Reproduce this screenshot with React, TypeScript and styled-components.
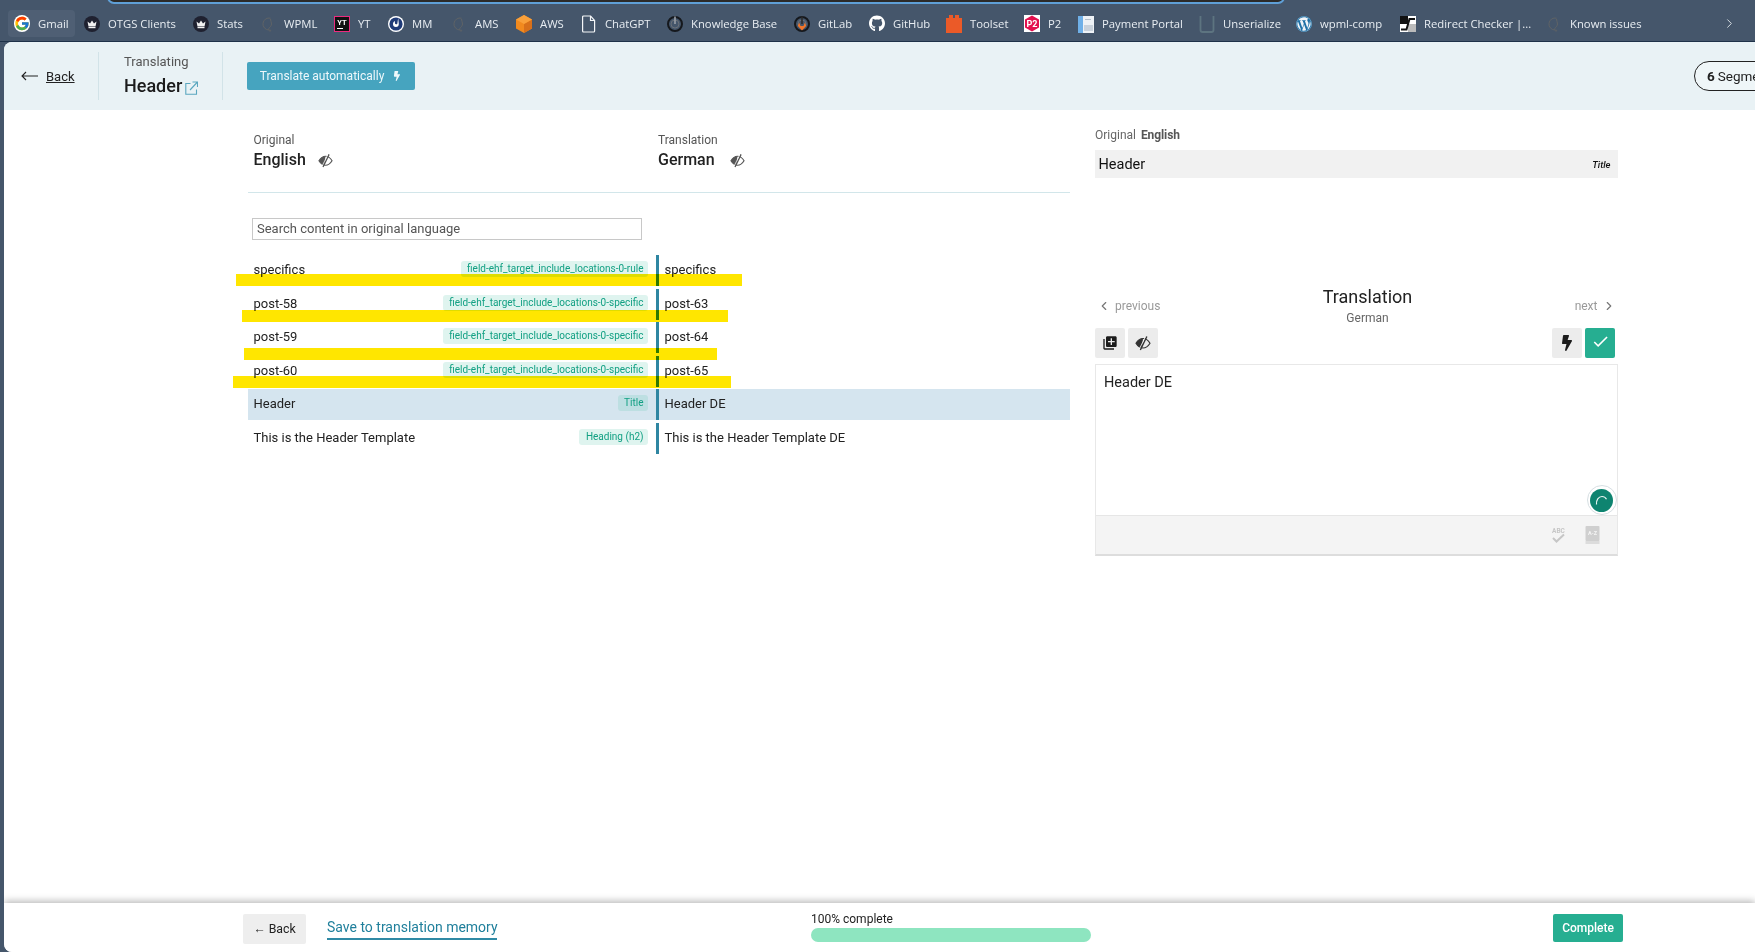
import React from "react";
import styled, { createGlobalStyle } from "styled-components";
import { FcGoogle } from "react-icons/fc";
import { FaGithub, FaWordpress, FaBolt } from "react-icons/fa";
import { MdLibraryAdd, MdCheck } from "react-icons/md";
import { ChevronLeft, ChevronRight } from "lucide-react";

const Global = createGlobalStyle`
  html, body { margin: 0; padding: 0; height: 100%; background: #45566b; }
  #root { height: 100%; }
  * { box-sizing: border-box; }
  body { font-family: Roboto, "Liberation Sans", sans-serif; color: #222; }
`;

const Shell = styled.div`
  height: 952px;
  width: 1755px;
  display: flex;
  flex-direction: column;
  overflow: hidden;
  background: #45566b;
`;

/* ---------- Bookmarks ---------- */
const BookmarkBar = styled.div`
  position: relative;
  height: 42px;
  padding: 10px 0 0 8px;
  display: flex;
  align-items: flex-start;
  gap: 3px;
  border-bottom: 1px solid #1e3148;
  flex: none;
`;
const AddressEdge = styled.div`
  position: absolute;
  left: 107px;
  top: -10px;
  width: 1178px;
  height: 14px;
  background: #2c2a28;
  border: 2px solid #5f9fd6;
  border-radius: 10px;
`;
const Bookmark = styled.div<{ $active?: boolean; $width: number }>`
  width: ${(p) => p.$width}px;
  height: 27px;
  padding: 0 0 0 6px;
  display: flex;
  align-items: center;
  gap: 8px;
  border-radius: 4px;
  background: ${(p) => (p.$active ? "#4f5f74" : "transparent")};
  font-family: "Open Sans", sans-serif;
  font-size: 11.3px;
  color: #e8edf2;
  white-space: nowrap;
  flex: none;
`;
const BookmarkIcon = styled.span`
  width: 16px;
  height: 16px;
  display: flex;
  align-items: center;
  justify-content: center;
  flex: none;
  svg { display: block; }
`;
const BookmarkMore = styled.div`
  margin-left: auto;
  margin-right: 18px;
  height: 27px;
  display: flex;
  align-items: center;
  color: #dfe5ea;
`;

const Crown = () => (
  <svg width="16" height="16" viewBox="0 0 16 16">
    <circle cx="8" cy="8" r="8" fill="#1f2130" />
    <path d="M3.5 5.5 6 7.5 8 4.5 10 7.5 12.5 5.5 11.5 10.5H4.5Z" fill="#f2f2f2" />
    <rect x="4.5" y="11" width="7" height="1.2" fill="#f2f2f2" />
  </svg>
);
const Swirl = () => (
  <svg width="16" height="16" viewBox="0 0 16 16" fill="none" stroke="#5f6366" strokeWidth="1">
    <path d="M10.5 2.2A6 6 0 1 0 9 14" />
    <path d="M9 14c-1.5-2 2.5-3 2.5-6 0-2-1-3-1-5" />
    <circle cx="10" cy="14.6" r=".7" />
  </svg>
);
const YtIcon = () => (
  <svg width="16" height="16" viewBox="0 0 16 16">
    <rect x=".5" y=".5" width="15" height="15" fill="#111" stroke="#ec2a7f" />
    <text x="8" y="9" textAnchor="middle" fontSize="7.5" fontWeight="700" fontFamily="Roboto" fill="#fff">YT</text>
    <rect x="3" y="12" width="6" height="1" fill="#fff" />
  </svg>
);
const MmIcon = () => (
  <svg width="16" height="16" viewBox="0 0 16 16">
    <circle cx="8" cy="8" r="8" fill="#fff" />
    <circle cx="8" cy="8" r="6.6" fill="#1e3a78" />
    <path d="M10.2 1.800 10.800 8a2.900 2.900 0 0 1-5.800 0c0-1.400.7-2.500 1.800-3.100L7 7.400a1.300 1.300 0 0 0 2.300.4Z" fill="#fff" />
  </svg>
);
const CubeIcon = () => (
  <svg width="16" height="18" viewBox="0 0 16 18">
    <path d="M8 0 16 4.500V13.500L8 18 0 13.500V4.500Z" fill="#f28a1e" />
    <path d="M8 9 16 4.500V13.500L8 18Z" fill="#d8701a" />
    <path d="M8 0 16 4.500 8 9 0 4.500Z" fill="#f9a03a" />
  </svg>
);
const PageIcon = () => (
  <svg width="16" height="18" viewBox="0 0 16 18" fill="none" stroke="#f4f6f8" strokeWidth="1.2">
    <path d="M2.600 1h7l4 4.500V16a1 1 0 0 1-1 1h-10a1 1 0 0 1-1-1V2a1 1 0 0 1 1-1Z" />
    <path d="M9.500 1v4.500h4" />
  </svg>
);
const PowerIcon = ({ flame }: { flame?: boolean }) => (
  <svg width="16" height="17" viewBox="0 0 16 17" fill="none">
    <circle cx="8" cy="9" r="7" stroke="#15181d" strokeWidth="2" />
    <circle cx="8" cy="9" r="4" stroke="#6a7078" strokeWidth="1" />
    <path d="M8 1.500V9" stroke={flame ? "#2b2b2b" : "#9aa0a8"} strokeWidth="1.600" />
    {flame && <path d="M8 15.500 3.800 10.800 5.200 7.500 6.500 11H9.500L10.800 7.500 12.200 10.800Z" fill="#f0752a" />}
  </svg>
);
const ToolsetIcon = () => (
  <svg width="16" height="18" viewBox="0 0 16 18">
    <path d="M0 3h3V0h4v3h2V0h4v3h3v15H0Z" fill="#eb5a28" />
  </svg>
);
const P2Icon = () => (
  <svg width="16" height="17" viewBox="0 0 16 17">
    <rect width="16" height="17" fill="#fff" />
    <path d="M8 .5 15 4.500V12.500L8 16.500 1 12.500V4.500Z" fill="#e3104f" />
    <text x="8" y="11.500" textAnchor="middle" fontSize="9" fontWeight="700" fontFamily="Roboto" fill="#fff">P2</text>
  </svg>
);
const PaymentIcon = () => (
  <svg width="16" height="18" viewBox="0 0 16 18">
    <rect x="0" y="1" width="16" height="17" fill="#eef2f6" />
    <rect x="0" y="1" width="5" height="17" fill="#6fb0e8" />
    <rect x="6" y="10" width="9" height="6" fill="#c9d2dc" />
    <rect x="7" y="4" width="6" height="1" fill="#b4bfca" />
  </svg>
);
const UnserializeIcon = () => (
  <svg width="16" height="18" viewBox="0 0 16 18" fill="none" stroke="#5d7480" strokeWidth="1.800">
    <path d="M1.500 1v14a2 2 0 0 0 2 2h9a2 2 0 0 0 2-2V1" />
  </svg>
);
const RedirectIcon = () => (
  <svg width="16" height="16" viewBox="0 0 16 16">
    <rect width="16" height="16" fill="#fff" />
    <rect width="8" height="8" fill="#111" />
    <rect x="8" y="8" width="8" height="8" fill="#bbb" />
    <path d="M1 13.500H6.500L9.500 3H15" fill="none" stroke="#111" strokeWidth="2" />
  </svg>
);

const bookmarks: { label: string; width: number; icon: React.ReactNode; active?: boolean }[] = [
  { label: "Gmail", width: 67, icon: <FcGoogle size={17} style={{ background: "#fff", borderRadius: 9 }} />, active: true },
  { label: "OTGS Clients", width: 106, icon: <Crown /> },
  { label: "Stats", width: 64, icon: <Crown /> },
  { label: "WPML", width: 71, icon: <Swirl /> },
  { label: "YT", width: 51, icon: <YtIcon /> },
  { label: "MM", width: 60, icon: <MmIcon /> },
  { label: "AMS", width: 62, icon: <Swirl /> },
  { label: "AWS", width: 62, icon: <CubeIcon /> },
  { label: "ChatGPT", width: 83, icon: <PageIcon /> },
  { label: "Knowledge Base", width: 124, icon: <PowerIcon /> },
  { label: "GitLab", width: 72, icon: <PowerIcon flame /> },
  { label: "GitHub", width: 74, icon: <FaGithub size={17} color="#fff" /> },
  { label: "Toolset", width: 75, icon: <ToolsetIcon /> },
  { label: "P2", width: 51, icon: <P2Icon /> },
  { label: "Payment Portal", width: 118, icon: <PaymentIcon /> },
  { label: "Unserialize", width: 94, icon: <UnserializeIcon /> },
  { label: "wpml-comp", width: 101, icon: <FaWordpress size={16} color="#f0f4f8" style={{ background: "#1d6fa5", borderRadius: 8 }} /> },
  { label: "Redirect Checker |...", width: 143, icon: <RedirectIcon /> },
  { label: "Known issues", width: 100, icon: <Swirl /> },
];

/* ---------- Page ---------- */
const Page = styled.div`
  flex: 1;
  margin-left: 4px;
  min-height: 0;
  background: #fff;
  border-radius: 8px 0 0 8px;
  overflow: hidden;
  display: flex;
  flex-direction: column;
`;
const Header = styled.header`
  height: 68px;
  flex: none;
  background: #e9f2f5;
  display: flex;
  align-items: center;
`;
const BackCell = styled.div`
  width: 95px;
  height: 48px;
  padding-left: 17px;
  display: flex;
  align-items: center;
  gap: 8px;
  border-right: 1px solid #d2e3e8;
`;
const BackLink = styled.a`
  font-size: 13px;
  color: #222;
  text-decoration: underline;
`;
const TitleCell = styled.div`
  width: 124px;
  height: 48px;
  padding: 1px 0 0 25px;
  border-right: 1px solid #d2e3e8;
`;
const TitleLabel = styled.div`
  font-size: 13px;
  line-height: 18px;
  color: #555;
`;
const TitleRow = styled.div`
  margin-top: 3px;
  display: flex;
  align-items: center;
  gap: 3px;
  font-size: 18px;
  line-height: 24px;
  font-weight: 500;
  color: #1b1b1b;
  svg { margin-top: 4px; }
`;
const AutoButton = styled.button`
  margin-left: 24px;
  width: 168px;
  height: 28px;
  border: 0;
  border-radius: 2px;
  background: #46a4bf;
  color: #eef8fb;
  font: 400 12px Roboto, sans-serif;
  display: flex;
  align-items: center;
  justify-content: center;
  gap: 8px;
`;
const SegmentsPill = styled.div`
  margin-left: auto;
  margin-right: -37px;
  width: 98px;
  height: 30px;
  border: 1px solid #222;
  border-radius: 15px;
  padding-left: 12px;
  display: flex;
  align-items: center;
  gap: 3px;
  font-size: 13.5px;
  background: #eff6f8;
  white-space: nowrap;
  b { font-weight: 700; }
`;

const Main = styled.main`
  flex: 1;
  min-height: 0;
  display: flex;
  padding-left: 244px;
`;
const LeftPanel = styled.section`
  position: relative;
  width: 822px;
  flex: none;
`;
const LangHead = styled.div`
  display: grid;
  grid-template-columns: 404.500px 1fr;
  padding: 21px 0 21px 5.500px;
  border-bottom: 1px solid #d2e6ea;
  height: 83px;
`;
const LangLabel = styled.div`
  font-size: 12px;
  line-height: 18px;
  color: #555;
`;
const LangName = styled.div<{ $gap: number }>`
  display: flex;
  align-items: center;
  gap: ${(p) => p.$gap}px;
  font-size: 16px;
  line-height: 22px;
  font-weight: 500;
  color: #222;
`;
const SearchBox = styled.input`
  display: block;
  margin: 25px 0 15px 4px;
  width: 390px;
  height: 22px;
  border: 1px solid #c8c8c8;
  padding: 0 3px 2px 4px;
  outline: none;
  font: 400 13px Roboto, sans-serif;
  &::placeholder { color: #555; opacity: 1; }
`;
const Rows = styled.div`
  display: flex;
  flex-direction: column;
  gap: 2.600px;
`;
const Row = styled.div<{ $selected?: boolean }>`
  display: grid;
  grid-template-columns: 408px 3px 1fr;
  height: 31px;
  background: ${(p) => (p.$selected ? "#d5e5ef" : "transparent")};
`;
const SourceCell = styled.div`
  display: flex;
  align-items: center;
  justify-content: space-between;
  padding: 0 8px 2px 5.500px;
  font-size: 13px;
  color: #222;
`;
const Rule = styled.div`
  background: #2f86a2;
`;
const TargetCell = styled.div`
  display: flex;
  align-items: center;
  padding: 0 0 2px 5.500px;
  font-size: 13px;
  color: #222;
`;
const Tag = styled.span<{ $selected?: boolean }>`
  height: 16px;
  margin-top: -1px;
  padding: 0 4.500px 0 6.500px;
  border-radius: 3px;
  background: ${(p) => (p.$selected ? "#bddfe2" : "#dff4ef")};
  color: #12a083;
  font-size: 10px;
  line-height: 15px;
  white-space: nowrap;
`;
const Highlight = styled.div<{ $left: number; $top: number; $width: number }>`
  position: absolute;
  left: ${(p) => p.$left}px;
  top: ${(p) => p.$top}px;
  width: ${(p) => p.$width}px;
  height: 12px;
  background: #ffe600;
  mix-blend-mode: multiply;
`;

const RightPanel = styled.section`
  width: 522.500px;
  margin-left: 25px;
  flex: none;
  padding-top: 16px;
`;
const OrigLabel = styled.div`
  display: flex;
  gap: 5px;
  font-size: 12px;
  line-height: 18px;
  color: #666;
  b { font-weight: 700; color: #555; letter-spacing: -0.1px; }
`;
const OrigBox = styled.div`
  margin-top: 6px;
  height: 28px;
  background: #f1f1f1;
  padding: 0 7px 0 3.500px;
  display: flex;
  align-items: center;
  justify-content: space-between;
  font-size: 14.500px;
  color: #111;
  i { font-size: 9.500px; font-weight: 500; }
`;
const Nav = styled.div`
  margin-top: 107px;
  padding: 0 6px;
  display: flex;
  justify-content: space-between;
`;
const NavLink = styled.div`
  margin-top: 13px;
  height: 16px;
  display: flex;
  align-items: center;
  gap: 8px;
  font-size: 12px;
  color: #9a9a9a;
  svg { color: #777; margin: 0 -4px; }
`;
const NavTitle = styled.div`
  text-align: center;
  font-size: 18px;
  line-height: 24px;
  color: #222;
  small {
    display: block;
    margin-top: 1px;
    font-size: 12px;
    line-height: 16px;
    color: #666;
  }
`;
const Toolbar = styled.div`
  margin-top: 2px;
  padding-right: 2.500px;
  display: flex;
  gap: 3px;
`;
const ToolButton = styled.button<{ $primary?: boolean; $push?: boolean }>`
  width: 30px;
  height: 30px;
  padding: 0;
  border: 0;
  border-radius: 2px;
  margin-left: ${(p) => (p.$push ? "auto" : "0")};
  background: ${(p) => (p.$primary ? "#26ae91" : "#ececec")};
  color: ${(p) => (p.$primary ? "#fff" : "#1b1b1b")};
  display: flex;
  align-items: center;
  justify-content: center;
`;
const Editor = styled.div`
  position: relative;
  margin-top: 6px;
  border: 1px solid #e8e8e8;
  border-bottom: 2px solid #ddd;
  height: 192px;
  display: flex;
  flex-direction: column;
`;
const EditorText = styled.div`
  flex: 1;
  padding: 9px 8px;
  font-size: 14.500px;
  line-height: 18px;
  color: #222;
`;
const EditorFoot = styled.div`
  height: 39px;
  flex: none;
  background: #f4f4f4;
  border-top: 1px solid #e6e6e6;
  display: flex;
  align-items: center;
  justify-content: flex-end;
  gap: 19px;
  padding-right: 17px;
`;
const AssistantBadge = styled.div`
  position: absolute;
  right: 0;
  top: 120px;
  width: 30px;
  height: 30px;
  border-radius: 50%;
  background: #fff;
  border: 1px solid #d7dfe3;
  display: flex;
  align-items: center;
  justify-content: center;
`;

const Footer = styled.footer`
  position: relative;
  height: 49px;
  flex: none;
  background: #fff;
  box-shadow: 0 -2px 7px rgba(0, 0, 0, 0.28);
  padding: 9px 132px 0 239px;
  display: flex;
  align-items: flex-start;
`;
const FootBack = styled.button`
  margin-top: 2px;
  width: 63px;
  height: 30px;
  border: 0;
  border-radius: 2px;
  padding: 0;
  background: #eee;
  color: #222;
  font: 400 12.300px Roboto, sans-serif;
`;
const SaveLink = styled.a`
  margin: 5px 0 0 21px;
  height: 23px;
  width: 170px;
  border-bottom: 2px solid #2f8aa5;
  color: #1f7f9b;
  font-size: 14px;
  line-height: 20px;
  white-space: nowrap;
`;
const Progress = styled.div`
  margin-left: 314px;
  width: 280px;
`;
const ProgressLabel = styled.div`
  font-size: 12px;
  line-height: 14px;
  color: #222;
`;
const ProgressTrack = styled.div`
  margin-top: 2px;
  height: 14px;
  border-radius: 7px;
  background: #8ee5c0;
`;
const CompleteButton = styled.button`
  margin: 2px 0 0 auto;
  width: 70px;
  height: 28px;
  border: 0;
  border-radius: 2px;
  background: #26ae91;
  color: #fff;
  font: 500 12px Roboto, sans-serif;
`;

const ExternalIcon = () => (
  <svg width="13" height="14" viewBox="0 0 13 14" fill="none" stroke="#5aa7bf" strokeWidth="1.100">
    <path d="M5.500 2.500H.8v10.700h10.700V8.500" />
    <path d="M5 9 12 1.500M7.500 1h5v5" />
  </svg>
);
const ArrowLeft = () => (
  <svg width="17" height="10" viewBox="0 0 17 10" fill="none" stroke="#222" strokeWidth="1.100">
    <path d="M17 5H1M5 1 1 5l4 4" />
  </svg>
);
const EyeOff = ({ size = 15, tone = "#222" }: { size?: number; tone?: string }) => (
  <svg width={size} height={size} viewBox="0 0 16 16">
    <path d="M1 8.200C3 5 5.500 3.500 8 3.500S13 5 15 8.200C13 11.400 10.500 13 8 13S3 11.400 1 8.200Z" fill="none" stroke={tone} strokeWidth="1.200" />
    <path d="M1 8.200C3 5 5.500 3.500 8 3.500L7 13C4.800 12.700 2.800 11 1 8.200Z" fill={tone} />
    <path d="M11.800 1.500 5.300 15" stroke={tone} strokeWidth="1.500" />
    <path d="M10.200 2.200 4 14.700" stroke="#fff" strokeWidth=".8" />
  </svg>
);
const AbcCheck = () => (
  <svg width="15" height="18" viewBox="0 0 15 18" fill="none">
    <text x="7.500" y="6.500" textAnchor="middle" fontSize="6.500" fontWeight="700" fontFamily="Roboto" fill="#c6c6c6">ABC</text>
    <path d="M2 12l3.500 3.500L13 8.500" stroke="#c6c6c6" strokeWidth="2" />
  </svg>
);
const GlossaryIcon = () => (
  <svg width="15" height="18" viewBox="0 0 15 18">
    <rect x=".5" width="14" height="15" rx="1" fill="#cfcfcf" />
    <rect x=".5" y="15" width="14" height="3" fill="#dcdcdc" />
    <text x="7.500" y="9" textAnchor="middle" fontSize="5.500" fontWeight="700" fontFamily="Roboto" fill="#f4f4f4">A-Z</text>
  </svg>
);
const Assistant = () => (
  <svg width="23" height="23" viewBox="0 0 23 23" fill="none">
    <circle cx="11.500" cy="11.500" r="11.500" fill="#0e8470" />
    <path d="M6.500 15.500C6 11 8.500 7.500 12 7.500c2 0 3.500 1 4.500 2.800" stroke="#eaf6f3" strokeWidth="1.200" />
  </svg>
);

const segments = [
  { src: "specifics", tag: "field-ehf_target_include_locations-0-rule", dst: "specifics" },
  { src: "post-58", tag: "field-ehf_target_include_locations-0-specific", dst: "post-63" },
  { src: "post-59", tag: "field-ehf_target_include_locations-0-specific", dst: "post-64" },
  { src: "post-60", tag: "field-ehf_target_include_locations-0-specific", dst: "post-65" },
  { src: "Header", tag: "Title", dst: "Header DE", selected: true },
  { src: "This is the Header Template", tag: "Heading (h2)", dst: "This is the Header Template DE" },
];

const highlights = [
  { left: -12.500, top: 164, width: 506.500 },
  { left: -6, top: 200, width: 486 },
  { left: -4.500, top: 238, width: 473 },
  { left: -15.500, top: 266, width: 498 },
];

export default function App() {
  return (
    <Shell>
      <Global />
      <BookmarkBar>
        <AddressEdge />
        {bookmarks.map((b) => (
          <Bookmark key={b.label} $active={b.active} $width={b.width}>
            <BookmarkIcon>{b.icon}</BookmarkIcon>
            {b.label}
          </Bookmark>
        ))}
        <BookmarkMore>
          <ChevronRight size={15} strokeWidth={1.500} />
        </BookmarkMore>
      </BookmarkBar>
      <Page>
        <Header>
          <BackCell>
            <ArrowLeft />
            <BackLink>Back</BackLink>
          </BackCell>
          <TitleCell>
            <TitleLabel>Translating</TitleLabel>
            <TitleRow>
              Header
              <ExternalIcon />
            </TitleRow>
          </TitleCell>
          <AutoButton>
            Translate automatically
            <FaBolt size={10} />
          </AutoButton>
          <SegmentsPill>
            <b>6</b> Segments
          </SegmentsPill>
        </Header>
        <Main>
          <LeftPanel>
            <LangHead>
              <div>
                <LangLabel>Original</LangLabel>
                <LangName $gap={12}>
                  English <EyeOff tone="#555" />
                </LangName>
              </div>
              <div>
                <LangLabel>Translation</LangLabel>
                <LangName $gap={15}>
                  German <EyeOff tone="#555" />
                </LangName>
              </div>
            </LangHead>
            <SearchBox placeholder="Search content in original language" />
            <Rows>
              {segments.map((s) => (
                <Row key={s.src} $selected={s.selected}>
                  <SourceCell>
                    {s.src}
                    <Tag $selected={s.selected}>{s.tag}</Tag>
                  </SourceCell>
                  <Rule />
                  <TargetCell>{s.dst}</TargetCell>
                </Row>
              ))}
            </Rows>
            {highlights.map((h) => (
              <Highlight key={h.top} $left={h.left} $top={h.top} $width={h.width} />
            ))}
          </LeftPanel>
          <RightPanel>
            <OrigLabel>
              Original <b>English</b>
            </OrigLabel>
            <OrigBox>
              Header <i>Title</i>
            </OrigBox>
            <Nav>
              <NavLink>
                <ChevronLeft size={14} />
                <span>previous</span>
              </NavLink>
              <NavTitle>
                Translation
                <small>German</small>
              </NavTitle>
              <NavLink>
                <span>next</span>
                <ChevronRight size={14} />
              </NavLink>
            </Nav>
            <Toolbar>
              <ToolButton>
                <MdLibraryAdd size={16} />
              </ToolButton>
              <ToolButton>
                <EyeOff size={16} tone="#333" />
              </ToolButton>
              <ToolButton $push>
                <FaBolt size={16} />
              </ToolButton>
              <ToolButton $primary>
                <MdCheck size={19} style={{ marginBottom: 3 }} />
              </ToolButton>
            </Toolbar>
            <Editor>
              <EditorText>Header DE</EditorText>
              <EditorFoot>
                <AbcCheck />
                <GlossaryIcon />
              </EditorFoot>
              <AssistantBadge>
                <Assistant />
              </AssistantBadge>
            </Editor>
          </RightPanel>
        </Main>
        <Footer>
          <FootBack>← Back</FootBack>
          <SaveLink>Save to translation memory</SaveLink>
          <Progress>
            <ProgressLabel>100% complete</ProgressLabel>
            <ProgressTrack />
          </Progress>
          <CompleteButton>Complete</CompleteButton>
        </Footer>
      </Page>
    </Shell>
  );
}
